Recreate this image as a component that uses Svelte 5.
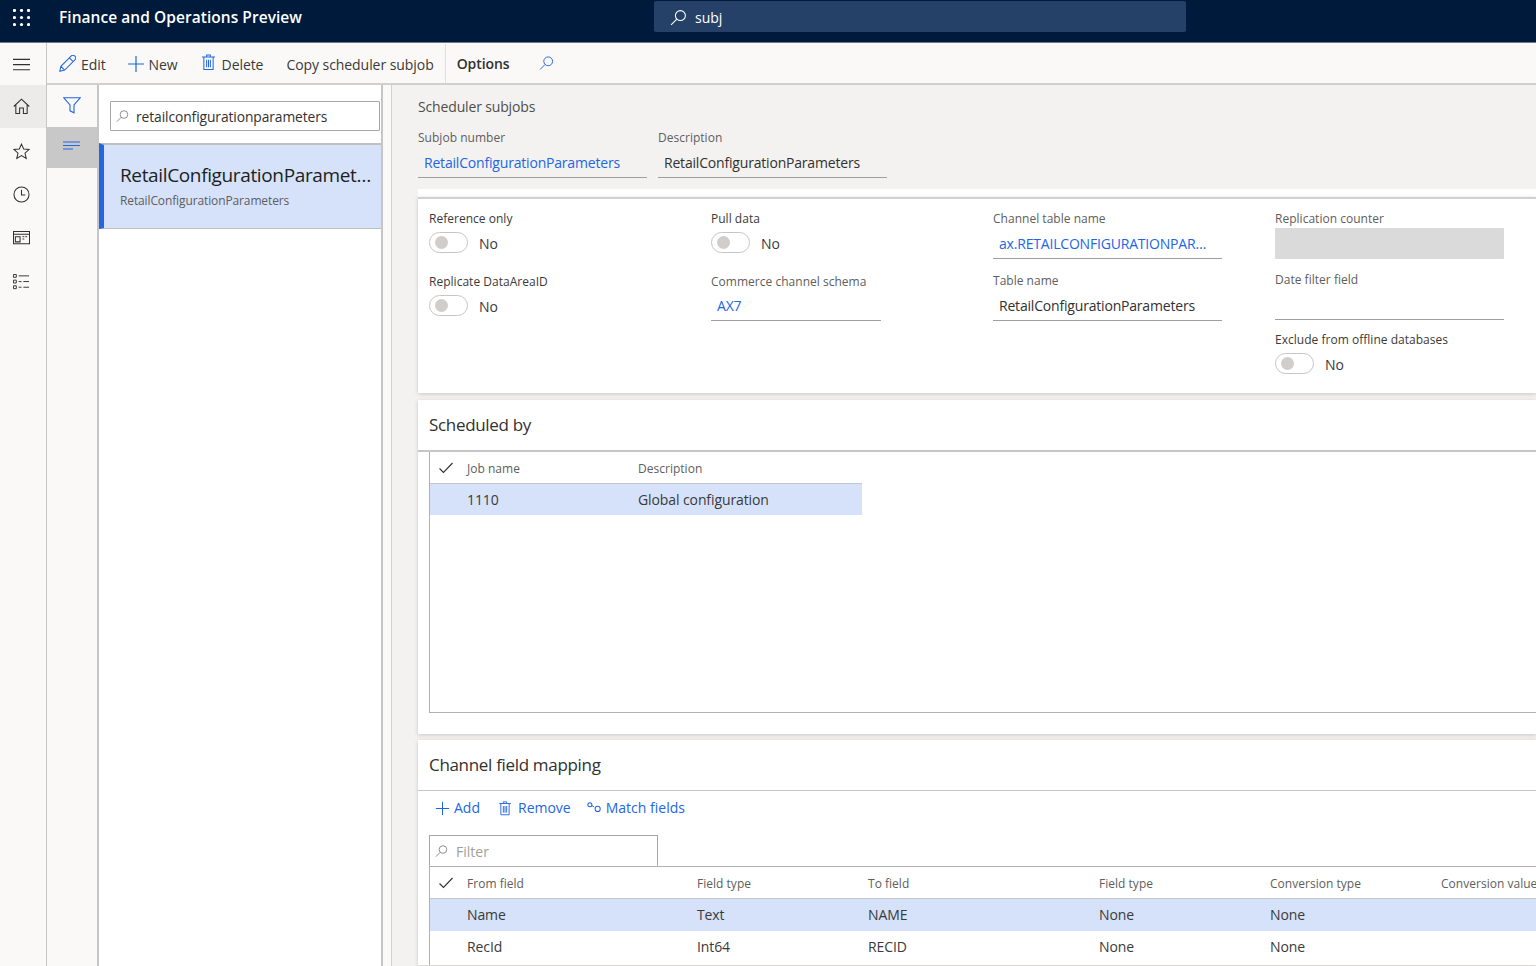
<script>
  const actions = [
    { label: 'Edit', icon: 'edit' },
    { label: 'New', icon: 'plus' },
    { label: 'Delete', icon: 'trash' },
    { label: 'Copy scheduler subjob', icon: null }
  ];
  const mapCols = ['From field', 'Field type', 'To field', 'Field type', 'Conversion type', 'Conversion value'];
  const mapRows = [
    { cells: ['Name', 'Text', 'NAME', 'None', 'None', ''], selected: true },
    { cells: ['RecId', 'Int64', 'RECID', 'None', 'None', ''], selected: false }
  ];
</script>

{#snippet search(cls)}
  <svg class={cls} viewBox="0 0 16 16" fill="none" stroke="currentColor" stroke-width="1"><circle cx="9.8" cy="6.2" r="4.7"/><path d="M6.4 9.6 1 15"/></svg>
{/snippet}
{#snippet plus(cls)}
  <svg class={cls} viewBox="0 0 18 18" fill="none" stroke="currentColor" stroke-width="1.2"><path d="M9 1v16M1 9h16"/></svg>
{/snippet}
{#snippet trash(cls)}
  <svg class={cls} viewBox="0 0 14 18" fill="none" stroke="currentColor" stroke-width="1.1"><path d="M0 3h14M2 3v13.5h10V3M5 3V1h4v2M5 6v8M7 6v8M9 6v8"/></svg>
{/snippet}
{#snippet check()}
  <svg class="check" viewBox="0 0 14 12" fill="none" stroke="#323130" stroke-width="1.1"><path d="M.5 6.5 4.5 10.5 13.5 1"/></svg>
{/snippet}
{#snippet toggle()}
  <div class="toggle-row"><span class="toggle"><span class="knob"></span></span><span class="no">No</span></div>
{/snippet}
{#snippet input(label, value, link)}
  <div class="field">
    <div class="label muted">{label}</div>
    <div class="input" class:link>{value}</div>
  </div>
{/snippet}

<div class="page">
  <header class="top">
    <svg class="waffle" viewBox="0 0 17 17" fill="#fff">
      {#each [1.5, 8.5, 15.5] as y}{#each [1.5, 8.5, 15.5] as x}<circle cx={x} cy={y} r="1.6"/>{/each}{/each}
    </svg>
    <div class="title">Finance and Operations Preview</div>
    <div class="topsearch">{@render search('i-top')}<span>subj</span></div>
  </header>

  <div class="body">
    <nav class="rail">
      <div class="rail-btn">
        <svg class="i-rail" viewBox="0 0 18 14" fill="none" stroke="#323130" stroke-width="1.2"><path d="M0 1.5h18M0 7h18M0 12.5h18"/></svg>
      </div>
      <div class="rail-btn tall active">
        <svg class="i-rail" viewBox="0 0 18 18" fill="none" stroke="#323130" stroke-width="1.1"><path d="M.8 9 9 1.2 17.2 9M3 7v9.5h4v-6h4v6h4V7"/></svg>
      </div>
      <div class="rail-btn tall star">
        <svg class="i-rail" viewBox="0 0 18 18" fill="none" stroke="#323130" stroke-width="1.1"><path d="m9 1.2 2.3 5.2 5.6.5-4.2 3.8 1.3 5.6L9 13.4l-5 2.9 1.3-5.6L1.100 6.900l5.600-.5z"/></svg>
      </div>
      <div class="rail-btn tall">
        <svg class="i-rail" viewBox="0 0 18 18" fill="none" stroke="#323130" stroke-width="1.1"><circle cx="9" cy="9" r="8"/><path d="M9 4v5.500h4"/></svg>
      </div>
      <div class="rail-btn tall">
        <svg class="i-rail" viewBox="0 0 18 14" fill="none" stroke="#323130" stroke-width="1.1"><path d="M.5.500h17v13H.5zM.5 3.500h17M2.500 6h5v5.500h-5z"/><path d="M10 6h2M13 6h2M10 8.500h2" stroke-width="1"/></svg>
      </div>
      <div class="rail-btn tall">
        <svg class="i-rail" viewBox="0 0 18 16" fill="none" stroke="#323130" stroke-width="1"><path d="M.5.500h3v3h-3zM.5 6.500h3v3h-3zM.5 12.500h3v3h-3zM6 2h11M6 8h3M11 8h6M6 14h3M11 14h6"/></svg>
      </div>
    </nav>

    <div class="content">
      <div class="actionbar">
        {#each actions as a}
          <div class="action">
            {#if a.icon === 'edit'}
              <svg class="i-edit" viewBox="0 0 18 18" fill="none" stroke="#2266e3" stroke-width="1.1"><path d="M.8 17.200 2 12 12.800 1.200a2 2 0 0 1 4 4L6 16zM2 12l4 4M11 3l4 4"/></svg>
            {:else if a.icon === 'plus'}
              {@render plus('i-plus')}
            {:else if a.icon === 'trash'}
              {@render trash('i-trash')}
            {/if}
            <span>{a.label}</span>
          </div>
        {/each}
        <div class="options">Options</div>
        {@render search('i-action-search')}
      </div>

      <div class="workspace">
        <div class="filter-rail">
          <div class="filter-btn">
            <svg class="i-filter" viewBox="0 0 18 17" fill="none" stroke="#2266e3" stroke-width="1.1"><path d="M.8.800h16.400L11 8v7.800L7 13.800V8z"/></svg>
          </div>
          <div class="filter-btn selected">
            <svg class="i-lines" viewBox="0 0 18 9" fill="none" stroke="#2266e3" stroke-width="1"><path d="M0 1h17M0 4.500h17M0 8h10"/></svg>
          </div>
        </div>

        <aside class="list">
          <div class="list-search">{@render search('i-box')}<span>retailconfigurationparameters</span></div>
          <div class="list-item">
            <div class="item-title">RetailConfigurationParameters</div>
            <div class="item-sub">RetailConfigurationParameters</div>
          </div>
        </aside>
        <div class="gutter"></div>

        <main class="main">
          <div class="caption">Scheduler subjobs</div>
          <div class="head-fields">
            {@render input('Subjob number', 'RetailConfigurationParameters', true)}
            {@render input('Description', 'RetailConfigurationParameters', false)}
          </div>

          <div class="strip"></div>
          <section class="card general">
            <div class="gcol">
              <div class="field"><div class="label">Reference only</div>{@render toggle()}</div>
              <div class="field"><div class="label">Replicate DataAreaID</div>{@render toggle()}</div>
            </div>
            <div class="gcol">
              <div class="field"><div class="label">Pull data</div>{@render toggle()}</div>
              <div class="field narrow">
                <div class="label muted">Commerce channel schema</div>
                <div class="input link">AX7</div>
              </div>
            </div>
            <div class="gcol wide">
              {@render input('Channel table name', 'ax.RETAILCONFIGURATIONPARAMETERS', true)}
              {@render input('Table name', 'RetailConfigurationParameters', false)}
            </div>
            <div class="gcol wide">
              <div class="field"><div class="label muted">Replication counter</div><div class="input disabled"></div></div>
              <div class="field"><div class="label muted">Date filter field</div><div class="input"></div></div>
              <div class="field"><div class="label">Exclude from offline databases</div>{@render toggle()}</div>
            </div>
          </section>

          <section class="card scheduled">
            <h2>Scheduled by</h2>
            <div class="grid-box">
              <div class="row header sched">
                <div class="cell-check">{@render check()}</div><div>Job name</div><div>Description</div>
              </div>
              <div class="row body-row sched selected">
                <div class="cell-check"></div><div>1110</div><div>Global configuration</div>
              </div>
            </div>
          </section>

          <section class="card mapping">
            <h2>Channel field mapping</h2>
            <div class="subbar">
              <div class="sub-action">{@render plus('i-sub-plus')}<span>Add</span></div>
              <div class="sub-action">{@render trash('i-sub-trash')}<span>Remove</span></div>
              <div class="sub-action">
                <svg class="i-match" viewBox="0 0 15 12" fill="none" stroke="#2266e3" stroke-width="1.1"><circle cx="3" cy="3" r="2.2"/><circle cx="11.500" cy="7.500" r="2.800"/><path d="M5.200 4 7.500 5.300"/></svg>
                <span>Match fields</span>
              </div>
            </div>
            <div class="filter-box">{@render search('i-box')}<span>Filter</span></div>
            <div class="map-grid">
              <div class="row header map">
                <div class="cell-check">{@render check()}</div>
                {#each mapCols as c}<div>{c}</div>{/each}
              </div>
              {#each mapRows as r}
                <div class="row body-row map" class:selected={r.selected}>
                  <div class="cell-check"></div>
                  {#each r.cells as c}<div>{c}</div>{/each}
                </div>
              {/each}
            </div>
          </section>
        </main>
      </div>
    </div>
  </div>
</div>

<style>
  :global(body) { margin: 0; background: #faf9f8; }
  .page {
    width: 1536px; height: 966px; overflow: hidden;
    display: flex; flex-direction: column;
    font-family: "Open Sans", "Noto Sans", "Liberation Sans", sans-serif;
    font-size: 14px; color: #323130;
  }
  svg { display: block; flex: none; }

  .top {
    height: 43px; flex: none; box-sizing: border-box; background: #001a3c;
    border-bottom: 1px solid #6b7a8c;
    display: flex; align-items: flex-start; color: #fff;
  }
  .waffle { width: 17px; height: 17px; margin: 9px 0 0 13px; }
  .title { width: 595px; margin-left: 29px; font-size: 15.500px; font-weight: 600; line-height: 34px; letter-spacing: .05px; white-space: nowrap; }
  .topsearch {
    width: 532px; height: 31px; margin-top: 1px; box-sizing: border-box; padding: 2px 0 0 16px;
    background: #264168; border-radius: 2px; display: flex; align-items: center; gap: 8px; font-size: 14px;
  }
  .i-top { width: 17px; height: 17px; color: #fff; margin-top: -1px; }

  .body { flex: 1; display: flex; min-height: 0; }
  .rail { width: 47px; flex: none; box-sizing: border-box; background: #faf9f8; border-right: 1px solid #c8c6c4; }
  .rail-btn { height: 41px; display: flex; align-items: center; justify-content: center; padding-right: 4px; }
  .rail-btn:first-child { padding-top: 1px; }
  .rail-btn.tall { height: 44px; }
  .rail-btn.active { background: #edebe9; height: 43px; }
  .rail-btn.star { padding-top: 2px; box-sizing: border-box; }
  .i-rail { width: 17px; height: auto; }

  .content { flex: 1; min-width: 0; display: flex; flex-direction: column; }
  .actionbar {
    height: 42px; flex: none; box-sizing: border-box; background: #faf9f8; padding-top: 1px;
    border-bottom: 2px solid #d2d0ce; display: flex; align-items: center; padding-left: 12px;
  }
  .action { display: flex; align-items: center; gap: 5px; margin-right: 21px; color: #3b3a39; font-size: 14px; letter-spacing: -.08px; white-space: nowrap; line-height: 20px; }
  .action span { padding-top: 2px; }
  .action:nth-child(2) { gap: 4px; margin-right: 24px; }
  .action:nth-child(3) { gap: 7px; margin-right: 23px; }
  .action:nth-child(4) { margin-right: 11px; letter-spacing: -.06px; }
  .i-edit { width: 17px; height: 17px; }
  .i-plus { width: 18px; height: 18px; color: #2266e3; }
  .i-trash { width: 13px; height: 17px; color: #2266e3; margin-top: -2px; }
  .options {
    height: 39px; line-height: 40px; padding: 0 0 0 11px; width: 65px; flex: none;
    border-left: 1px solid #e1dfdd; font-weight: 600; font-size: 14px; color: #323130; letter-spacing: -.1px;
  }
  .i-action-search { width: 15px; height: 16px; margin: -2px 0 0 17px; color: #2266e3; }

  .workspace { flex: 1; display: flex; min-height: 0; }
  .filter-rail { width: 52px; flex: none; box-sizing: border-box; background: #faf9f8; border-right: 2px solid #c8c6c4; }
  .filter-btn { height: 42px; display: flex; justify-content: center; padding-top: 12px; box-sizing: border-box; }
  .filter-btn.selected { height: 41px; background: #c8c8c8; padding-top: 14px; }
  .i-filter { width: 18px; height: 17px; }
  .i-lines { width: 18px; height: 9px; }

  .list { width: 284px; flex: none; box-sizing: border-box; background: #fff; border-right: 2px solid #c8c6c4; }
  .list-search {
    width: 270px; height: 30px; margin: 16px 0 12px 11px; box-sizing: border-box;
    border: 1px solid #a6a6a6; border-radius: 1px; display: flex; align-items: center;
    padding-left: 5px; gap: 7px; font-size: 13.800px; letter-spacing: -.08px; color: #323130;
  }
  .i-box { width: 13px; height: 14px; color: #797775; }
  .list-item {
    height: 86px; box-sizing: border-box; margin-left: 0; background: #d5e2f9;
    border-left: 5px solid #2266e3; border-top: 2px solid #c0c0c0; border-bottom: 1px solid #c0c0c0;
    padding: 17px 8px 0 16px;
  }
  .item-title { font-size: 19px; font-weight: 500; line-height: 26px; letter-spacing: -.36px; white-space: nowrap; overflow: hidden; text-overflow: ellipsis; color: #201f1e; }
  .item-sub { font-size: 12px; line-height: 18px; margin-top: 4px; letter-spacing: -.12px; color: #605e5c; white-space: nowrap; }
  .gutter { width: 8px; flex: none; background: #faf9f8; border-right: 1px solid #d2d0ce; }

  .main { flex: 1; min-width: 0; background: #f3f2f1; padding-left: 26px; }
  .caption { margin-top: 12px; font-size: 14px; line-height: 20px; color: #4f4e4c; letter-spacing: -.15px; }
  .head-fields { display: flex; gap: 11px; height: 60px; margin-top: 12px; }
  .head-fields .field { width: 229px; }

  .field { width: 229px; }
  .label { font-size: 12px; line-height: 18px; font-weight: 500; color: #3b3a39; white-space: nowrap; letter-spacing: .02px; }
  .label.muted { color: #605e5c; }
  .input {
    height: 30px; margin-top: 1px; box-sizing: border-box; border-bottom: 1px solid #a19f9d;
    padding: 0 13px 0 6px; font-size: 14px; line-height: 29px; letter-spacing: -.19px;
    white-space: nowrap; overflow: hidden; text-overflow: ellipsis; color: #323130;
  }
  .input.link { color: #2266e3; }
  .input.disabled { background: #dadada; border: 0; border-radius: 1px; height: 31px; margin-top: 0; }
  .narrow { width: 170px; }
  .narrow .input { margin-top: 0; }

  .strip { height: 8px; background: #fff; }
  .card { background: #fff; box-shadow: 0 1px 4px rgba(0,0,0,.18); }
  .general {
    height: 196px; box-sizing: border-box; margin-bottom: 7px; padding: 11px 0 0 11px;
    border-top: 2px solid #d2d0ce; display: flex;
  }
  .gcol { width: 282px; flex: none; display: flex; flex-direction: column; }
  .gcol .field { margin-bottom: 11px; min-height: 52px; }
  .gcol.wide .field { margin-bottom: 13px; min-height: 0; }
  .gcol.wide .field:nth-child(3) { margin-top: 0; }
  .toggle-row { display: flex; align-items: center; gap: 11px; height: 34px; margin-top: -1px; margin-bottom: -1px; }
  .toggle {
    width: 39px; height: 21px; box-sizing: border-box; border: 1px solid #c8c6c4; border-radius: 11px;
    position: relative; margin-top: -3px; background: #fff;
  }
  .knob { position: absolute; left: 5px; top: 3px; width: 13px; height: 13px; border-radius: 50%; background: #cfcecd; }
  .no { font-size: 14px; color: #3b3a39; margin-top: -2px; }

  h2 { margin: 0; font-size: 17px; font-weight: 500; color: #323130; letter-spacing: -.32px; line-height: 24px; }
  .scheduled { height: 334px; box-sizing: border-box; margin-bottom: 6px; padding-top: 13px; }
  .scheduled h2, .mapping h2 { padding-left: 11px; }
  .scheduled h2 { border-bottom: 2px solid #c8c6c4; padding-bottom: 13px; }
  .grid-box {
    height: 261px; box-sizing: border-box; margin: 0 0 0 11px; border: 1px solid #b3b0ad; border-right: 0;
    border-top: 0;
  }
  .row { display: grid; align-items: center; height: 32px; box-sizing: border-box; white-space: nowrap; }
  .sched { grid-template-columns: 37px 171px 224px; width: 432px; }
  .map { grid-template-columns: 37px 230px 171px 231px 171px 171px 171px; }
  .row.header { font-size: 12px; font-weight: 500; color: #605e5c; letter-spacing: .02px; height: 32px; padding-top: 2px; border-bottom: 1px solid #c8c6c4; }
  .row.body-row { font-size: 14px; color: #3b3a39; letter-spacing: -.1px; height: 32px; }
  .row.body-row.map { padding-bottom: 2px; }
  .row.body-row.sched { height: 31px; }
  .row.selected { background: #d5e2f9; }
  .cell-check { display: flex; padding-left: 9px; }
  .check { width: 14px; height: 12px; margin-top: -2px; }

  .mapping { padding-top: 13px; height: 225px; box-sizing: border-box; }
  .mapping h2 { border-bottom: 1px solid #c8c6c4; padding-bottom: 13px; }
  .subbar { display: flex; height: 34px; align-items: center; padding-left: 17px; color: #2266e3; margin-bottom: 10px; gap: 18px; font-size: 14px; }
  .sub-action { display: flex; align-items: center; gap: 4px; }
  .sub-action span { margin-top: -1px; }
  .sub-action:nth-child(2) { gap: 7px; margin-left: 1px; margin-right: -2px; }
  .sub-action:nth-child(3) { gap: 5px; }
  .i-sub-plus { width: 15px; height: 15px; }
  .i-sub-trash { width: 12px; height: 15px; }
  .i-match { width: 14px; height: 11px; margin-top: -1px; }
  .filter-box {
    width: 229px; height: 31px; box-sizing: border-box; margin-left: 11px; border: 1px solid #a6a6a6; border-bottom: 0;
    border-radius: 1px; display: flex; align-items: center; padding-left: 5px; gap: 8px; font-size: 14px; color: #a19f9d;
  }
  .map-grid { margin-left: 11px; min-height: 98px; border-left: 1px solid #b3b0ad; border-top: 1px solid #b3b0ad; }
</style>
